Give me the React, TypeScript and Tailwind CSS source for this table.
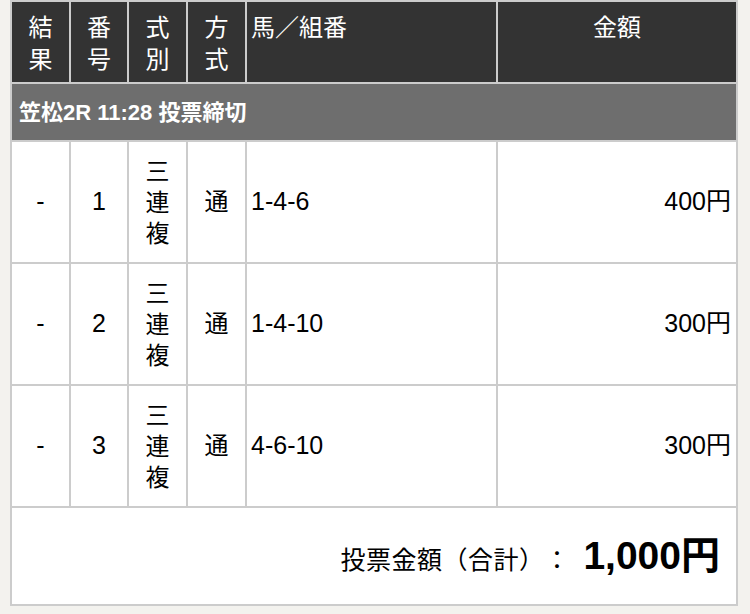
const font = "font-['Liberation_Sans','Noto_Sans_CJK_JP',sans-serif]";

const bets = [
  { no: 1, combo: "1-4-6", amount: "400円" },
  { no: 2, combo: "1-4-10", amount: "300円" },
  { no: 3, combo: "4-6-10", amount: "300円" },
];

const Stack = ({ chars, lh }: { chars: string[]; lh: string }) => (
  <div className={`flex flex-col items-center ${lh}`}>
    {chars.map((c, i) => (
      <span key={i}>{c}</span>
    ))}
  </div>
);

export default function App() {
  return (
    <div className={`min-h-[614px] w-[750px] bg-[#f3f2ee] ${font} [text-spacing-trim:space-all]`}>
      <div className="ml-[10px] grid w-[728px] grid-cols-[57px_56px_57px_57px_249px_238px] gap-[2px] bg-[#cccccc] p-[2px]">
        {/* header */}
        <div className="flex h-[80px] justify-center bg-[#333333] pt-[10px] text-[24px] text-white">
          <Stack chars={["結", "果"]} lh="leading-[32px]" />
        </div>
        <div className="flex h-[80px] justify-center bg-[#333333] pt-[10px] text-[24px] text-white">
          <Stack chars={["番", "号"]} lh="leading-[32px]" />
        </div>
        <div className="flex h-[80px] justify-center bg-[#333333] pt-[10px] text-[24px] text-white">
          <Stack chars={["式", "別"]} lh="leading-[32px]" />
        </div>
        <div className="flex h-[80px] justify-center bg-[#333333] pt-[10px] text-[24px] text-white">
          <Stack chars={["方", "式"]} lh="leading-[32px]" />
        </div>
        <div className="h-[80px] bg-[#333333] pl-[4px] pt-[10px] text-[24px] leading-[32px] text-white">
          馬／組番
        </div>
        <div className="h-[80px] bg-[#333333] pt-[10px] text-center text-[24px] leading-[32px] text-white">
          金額
        </div>

        {/* race row */}
        <div className="col-span-6 flex h-[56px] items-center bg-[#6e6e6e] pl-[7px] text-[22px] font-bold text-white">
          笠松2R 11:28 投票締切
        </div>

        {bets.map((b) => (
          <div key={b.no} className="contents text-[25px] text-black">
            <div className="flex h-[120px] items-center justify-center bg-white">-</div>
            <div className="flex h-[120px] items-center justify-center bg-white">{b.no}</div>
            <div className="flex h-[120px] items-center justify-center bg-white text-[24px]">
              <Stack chars={["三", "連", "複"]} lh="leading-[31px]" />
            </div>
            <div className="flex h-[120px] items-center justify-center bg-white text-[24px]">通</div>
            <div className="flex h-[120px] items-center bg-white pl-[4px]">{b.combo}</div>
            <div className="flex h-[120px] items-center justify-end bg-white pr-[5px]">{b.amount}</div>
          </div>
        ))}

        {/* total */}
        <div className="col-span-6 flex h-[96px] items-center justify-end bg-white pr-[16px] text-black">
          <div className="flex items-baseline">
            <span className="text-[25px] tracking-[0.5px]">投票金額（合計）</span>
            <span className="w-[24px] text-center text-[25px]">：</span>
            <span className="ml-[15px] text-[39px] font-bold">1,000円</span>
          </div>
        </div>
      </div>
    </div>
  );
}
